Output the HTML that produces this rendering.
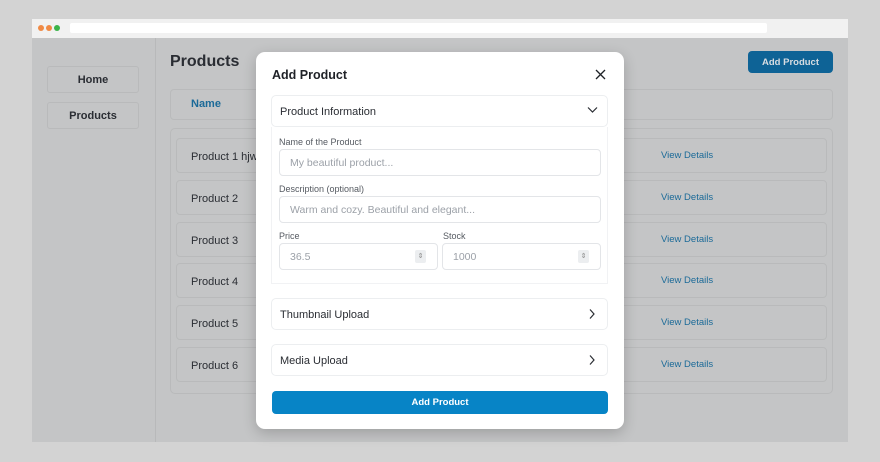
<!DOCTYPE html>
<html><head><style>
*{box-sizing:border-box;margin:0;padding:0}
body{width:880px;height:462px;background:#d3d3d3;font-family:"Liberation Sans",sans-serif;position:relative;overflow:hidden}
.a{position:absolute}
.win{left:32px;top:19px;width:816px;height:423px;background:#c4c5c6}
.bar{left:32px;top:19px;width:816px;height:19px;background:#f1f1f1}
.dot{width:6px;height:6px;border-radius:50%;top:25px}
.url{left:70px;top:23px;width:697px;height:10px;background:#fff;border-radius:2px}
.side{left:155px;top:38px;width:1px;height:404px;background:#b8b9ba}
.nav{left:47px;width:92px;height:27px;border:1px solid #b9babb;border-radius:3px;font-size:11px;font-weight:bold;color:#2a2d33;text-align:center;line-height:27px}
.row{left:176px;width:651px;height:35px;border:1px solid #b9babb;border-radius:4px;font-size:11px;color:#2a2d33;padding-left:14px;line-height:36px}
.vd{left:661px;font-size:9.5px;color:#1b6a98}
.modal{left:256px;top:52px;width:368px;height:377px;background:#fff;border-radius:9px;box-shadow:0 4px 14px rgba(0,0,0,.2)}
.sec{border:1px solid #eceef0;border-radius:5px;font-size:11px;color:#2a2d33;padding-left:8px}
.lbl{font-size:9px;color:#555a61}
.inp{border:1px solid #e3e5e8;border-radius:4px;font-size:10.5px;color:#9ca1a8;padding-left:10px}
</style></head><body>
<div class="a win"></div>
<div class="a bar"></div>
<div class="a dot" style="left:38px;background:#f08a45"></div>
<div class="a dot" style="left:46px;background:#f08a45"></div>
<div class="a dot" style="left:54px;background:#3cb44a"></div>
<div class="a url"></div>
<div class="a side"></div>
<div class="a nav" style="top:66px">Home</div>
<div class="a nav" style="top:102px">Products</div>
<div class="a" style="left:170px;top:53px;font-size:16px;font-weight:bold;color:#2a2d33">Products</div>
<div class="a" style="left:748px;top:51px;width:85px;height:22px;background:#0e6396;border-radius:4px;color:#d8dde2;font-size:9.5px;font-weight:bold;text-align:center;line-height:23px">Add Product</div>
<div class="a" style="left:170px;top:89px;width:663px;height:31px;border:1px solid #b9babb;border-radius:4px"></div>
<div class="a" style="left:191px;top:98px;font-size:11px;font-weight:bold;color:#1b6a98">Name</div>
<div class="a" style="left:170px;top:128px;width:663px;height:266px;border:1px solid #b9babb;border-radius:5px"></div>
<div class="a row" style="top:138px">Product 1 hjw</div>
<div class="a row" style="top:180px">Product 2</div>
<div class="a row" style="top:222px">Product 3</div>
<div class="a row" style="top:263px">Product 4</div>
<div class="a row" style="top:305px">Product 5</div>
<div class="a row" style="top:347px">Product 6</div>
<div class="a vd" style="top:150px">View Details</div>
<div class="a vd" style="top:192px">View Details</div>
<div class="a vd" style="top:234px">View Details</div>
<div class="a vd" style="top:275px">View Details</div>
<div class="a vd" style="top:317px">View Details</div>
<div class="a vd" style="top:359px">View Details</div>

<div class="a modal"></div>
<div class="a" style="left:272px;top:68px;font-size:12.5px;font-weight:bold;color:#1f2227">Add Product</div>
<svg class="a" style="left:595px;top:69px" width="11" height="11" viewBox="0 0 11 11"><path d="M1 1L10 10M10 1L1 10" stroke="#1f2227" stroke-width="1.3"/></svg>
<div class="a sec" style="left:271px;top:95px;width:337px;height:32px;line-height:32px">Product Information</div>
<svg class="a" style="left:587px;top:106px" width="11" height="8" viewBox="0 0 11 8"><path d="M1 1.5L5.5 6L10 1.5" stroke="#2a2d33" stroke-width="1.2" fill="none"/></svg>
<div class="a" style="left:271px;top:127px;width:337px;height:157px;border:1px solid #f1f2f4;border-top:none"></div>
<div class="a lbl" style="left:279px;top:137px">Name of the Product</div>
<div class="a inp" style="left:279px;top:149px;width:322px;height:27px;line-height:27px">My beautiful product...</div>
<div class="a lbl" style="left:279px;top:184px">Description (optional)</div>
<div class="a inp" style="left:279px;top:196px;width:322px;height:27px;line-height:27px">Warm and cozy. Beautiful and elegant...</div>
<div class="a lbl" style="left:279px;top:231px">Price</div>
<div class="a lbl" style="left:443px;top:231px">Stock</div>
<div class="a inp" style="left:279px;top:243px;width:159px;height:27px;line-height:27px">36.5</div>
<div class="a inp" style="left:442px;top:243px;width:159px;height:27px;line-height:27px">1000</div>
<div class="a" style="left:415px;top:250px;width:11px;height:13px;background:#eceef0;border-radius:2px;font-size:7px;color:#888;text-align:center;line-height:13px">⇕</div>
<div class="a" style="left:578px;top:250px;width:11px;height:13px;background:#eceef0;border-radius:2px;font-size:7px;color:#888;text-align:center;line-height:13px">⇕</div>
<div class="a sec" style="left:271px;top:298px;width:337px;height:32px;line-height:32px">Thumbnail Upload</div>
<div class="a sec" style="left:271px;top:344px;width:337px;height:32px;line-height:32px">Media Upload</div>
<svg class="a" style="left:588px;top:308px" width="8" height="12" viewBox="0 0 8 12"><path d="M2 1.5L6 6L2 10.5" stroke="#2a2d33" stroke-width="1.2" fill="none"/></svg>
<svg class="a" style="left:588px;top:354px" width="8" height="12" viewBox="0 0 8 12"><path d="M2 1.5L6 6L2 10.5" stroke="#2a2d33" stroke-width="1.2" fill="none"/></svg>
<div class="a" style="left:272px;top:391px;width:336px;height:23px;background:#0784c6;border-radius:4px;color:#fff;font-size:9.5px;font-weight:bold;text-align:center;line-height:24px">Add Product</div>
</body></html>
